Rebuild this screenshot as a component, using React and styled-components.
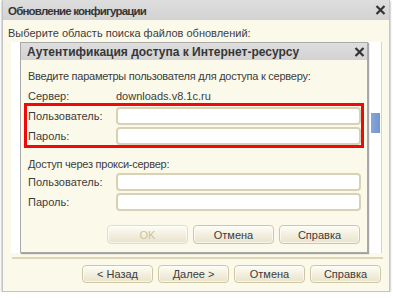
import styled, { createGlobalStyle } from "styled-components";

const GlobalStyle = createGlobalStyle`
  body {
    margin: 0;
    background: #ffffff;
    font-family: "Liberation Sans", Arial, sans-serif;
    font-size: 11px;
    color: #3c3c3c;
  }
`;

function CloseIcon() {
  return (
    <svg width="11" height="11" viewBox="0 0 11 11">
      <path d="M1.5 1.5 L9.5 9.5 M9.5 1.5 L1.5 9.5" stroke="#333" strokeWidth="2.2" />
    </svg>
  );
}

export default function App() {
  return (
    <>
      <GlobalStyle />
      <Window>
        <TitleBar>
          <Title $compact>Обновление конфигурации</Title>
          <CloseButton $right={3}>
            <CloseIcon />
          </CloseButton>
        </TitleBar>
        <Body>
          <Text>Выберите область поиска файлов обновлений:</Text>
          <List>
            <Scroll>
              <Thumb />
            </Scroll>
          </List>
          <Separator />
          <Footer>
            <Button $width={71}>&lt; Назад</Button>
            <Button $width={71}>Далее &gt;</Button>
            <Button $width={71}>Отмена</Button>
            <Button $width={71}>Справка</Button>
          </Footer>

          <Dialog>
            <DialogTitleBar>
              <Title>Аутентификация доступа к Интернет-ресурсу</Title>
              <CloseButton $right={2}>
                <CloseIcon />
              </CloseButton>
            </DialogTitleBar>
            <DialogBody>
              <Text $tight>Введите параметры пользователя для доступа к серверу:</Text>
              <InfoRow>
                <Label>Сервер:</Label>
                <span>downloads.v8.1c.ru</span>
              </InfoRow>
              <Highlight>
                <Row>
                  <Label>Пользователь:</Label>
                  <Field />
                </Row>
                <Row>
                  <Label>Пароль:</Label>
                  <Field />
                </Row>
              </Highlight>
              <Section>Доступ через прокси-сервер:</Section>
              <Fields>
                <Row>
                  <Label>Пользователь:</Label>
                  <Field />
                </Row>
                <Row>
                  <Label>Пароль:</Label>
                  <Field />
                </Row>
              </Fields>
              <DialogButtons>
                <Button $width={81} $height={19} disabled>
                  OK
                </Button>
                <Button $width={81} $height={19}>
                  Отмена
                </Button>
                <Button $width={81} $height={19}>
                  Справка
                </Button>
              </DialogButtons>
            </DialogBody>
          </Dialog>
        </Body>
      </Window>
    </>
  );
}

const Window = styled.div`
  margin-left: 2px;
  width: 388px;
  height: 292px;
  box-sizing: border-box;
  border: 1px solid #c4c4c4;
  border-top: none;
  background: #fbf9ea;
  box-shadow: 0 1px 2px rgba(0, 0, 0, 0.45);
  display: flex;
  flex-direction: column;
`;

const TitleBar = styled.div`
  position: relative;
  height: 20px;
  flex: none;
  display: flex;
  align-items: center;
  padding-left: 5px;
  padding-top: 1px;
  box-sizing: border-box;
  background: linear-gradient(#dedede, #d2d2d2);
`;

const Title = styled.div`
  font-size: ${(p) => (p.$compact ? 11.5 : 12)}px;
  letter-spacing: ${(p) => (p.$compact ? -0.8 : 0)}px;
  font-weight: bold;
  color: #363636;
  white-space: nowrap;
`;

const CloseButton = styled.div`
  position: absolute;
  right: ${(p) => p.$right}px;
  top: 50%;
  transform: translateY(-50%);
  width: 11px;
  height: 11px;
  display: flex;
`;

const Body = styled.div`
  position: relative;
  flex: 1;
  padding: 6px 7px 0 5px;
  display: flex;
  flex-direction: column;
`;

const Text = styled.div`
  line-height: 14px;
  white-space: nowrap;
  letter-spacing: ${(p) => (p.$tight ? -0.25 : 0)}px;
`;

const List = styled.div`
  margin: 2px 0 0 3px;
  height: 211px;
  background: #ffffff;
  border-right: 1px solid #ddd6b6;
  display: flex;
  justify-content: flex-end;
`;

const Scroll = styled.div`
  width: 10px;
  padding-top: 71px;
`;

const Thumb = styled.div`
  width: 9px;
  height: 20px;
  background: linear-gradient(90deg, #86a6dc, #7394cc);
`;

const Separator = styled.div`
  margin: 4px -1px 0 4px;
  height: 2px;
  background: #ddd5b3;
`;

const Footer = styled.div`
  margin-top: 6px;
  display: flex;
  justify-content: flex-end;
  gap: 5px;
  padding-right: 1px;
`;

const Button = styled.div`
  width: ${(p) => p.$width}px;
  height: ${(p) => p.$height || 18}px;
  box-sizing: border-box;
  border: 1px solid ${(p) => (p.disabled ? "#e3ddc6" : "#cfc7a4")};
  border-radius: 4px;
  background: linear-gradient(#fefdf7, #f1edda 60%, #e9e3cb);
  color: ${(p) => (p.disabled ? "#c9c2a4" : "#3c3c3c")};
  display: flex;
  align-items: center;
  justify-content: center;
  white-space: nowrap;
  box-shadow: inset 0 0 0 1px rgba(255, 255, 255, 0.6);
`;

const Dialog = styled.div`
  position: absolute;
  left: 17px;
  top: 22px;
  width: 348px;
  height: 211px;
  box-sizing: border-box;
  border: 1px solid #a9a9a9;
  background: #fbf9ea;
  box-shadow: 1px 1px 1px rgba(0, 0, 0, 0.35);
  display: flex;
  flex-direction: column;
`;

const DialogTitleBar = styled.div`
  position: relative;
  height: 17px;
  flex: none;
  display: flex;
  align-items: center;
  padding-left: 6px;
  background: linear-gradient(#dedede, #d2d2d2);
`;

const DialogBody = styled.div`
  padding: 9px 6px 0 7px;
  display: flex;
  flex-direction: column;
`;

const InfoRow = styled.div`
  margin-top: 6px;
  display: flex;
  line-height: 14px;
  white-space: nowrap;
`;

const Label = styled.div`
  width: 88px;
  flex: none;
  white-space: nowrap;
`;

const Highlight = styled.div`
  margin: 0 -3px 0 -4px;
  padding: 1px 0 0 1px;
  border: 3px solid #ee0a0a;
  display: flex;
  flex-direction: column;
  gap: 2px;
`;

const Row = styled.div`
  display: flex;
  align-items: center;
  height: 18px;
`;

const Field = styled.div`
  flex: 1;
  height: 18px;
  box-sizing: border-box;
  border: 2px solid #d8d1b3;
  border-radius: 4px;
  background: #ffffff;
`;

const Section = styled.div`
  margin-top: 9px;
  line-height: 14px;
  white-space: nowrap;
  letter-spacing: -0.25px;
`;

const Fields = styled.div`
  margin-top: 2px;
  display: flex;
  flex-direction: column;
  gap: 2px;
`;

const DialogButtons = styled.div`
  margin-top: 14px;
  display: flex;
  justify-content: flex-end;
  gap: 5px;
  padding-right: 1px;
`;
